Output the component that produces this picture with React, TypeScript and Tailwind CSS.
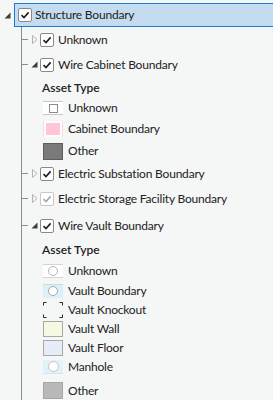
import React from "react";

const font = { fontFamily: '"Segoe UI", Lato, "Noto Sans", sans-serif' };

function Check({ disabled }: { disabled?: boolean }) {
  return (
    <span
      className={
        "flex w-[14px] h-[14px] shrink-0 items-center justify-center rounded-[2px] border bg-white " +
        (disabled ? "border-[#c8c8c8]" : "border-[#8a8a8a]")
      }
    >
      <svg width="10" height="10" viewBox="0 0 10 10">
        <path
          d="M1.5 5.2 L4 7.6 L8.6 2.4"
          fill="none"
          stroke={disabled ? "#a8a8a8" : "#1e1e1e"}
          strokeWidth="1.6"
        />
      </svg>
    </span>
  );
}

function Caret({ open }: { open?: boolean }) {
  return open ? (
    <svg width="7" height="7" viewBox="0 0 7 7" className="shrink-0">
      <path d="M6.5 0.5 L6.5 6.5 L0.5 6.5 Z" fill="#3c3c3c" />
    </svg>
  ) : (
    <svg width="6" height="9" viewBox="0 0 6 9" className="shrink-0">
      <path d="M0.5 0.5 L5 4.5 L0.5 8.5 Z" fill="none" stroke="#b4b4b4" />
    </svg>
  );
}

function LayerRow({
  label,
  open,
  disabled,
  h,
}: {
  label: string;
  open?: boolean;
  disabled?: boolean;
  h: string;
}) {
  return (
    <div className={"flex items-center " + h}>
      <span className="w-[6px] h-px bg-[#8c8c8c] shrink-0" />
      <span className="w-[9px] flex justify-center shrink-0 ml-[2px]">
        <Caret open={open} />
      </span>
      <span className="ml-[1px]">
        <Check disabled={disabled} />
      </span>
      <span className="ml-[4px] text-[12px] tracking-[-0.2px] text-[#222] whitespace-nowrap">{label}</span>
    </div>
  );
}

function Swatch({ kind }: { kind: string }) {
  const base = "w-[20px] shrink-0 ";
  switch (kind) {
    case "boxUnknown":
      return (
        <span className={base + "h-[14px] flex items-center justify-center bg-white border-y border-[#c8c8c8]"}>
          <span className="w-[9px] h-[9px] border-[1.5px] border-[#8a8a8a]" />
        </span>
      );
    case "pink":
      return (
        <span className={base + "h-[16px] flex items-center justify-center bg-white border-x border-[#ffd6e0]"}>
          <span className="w-[14px] h-[12px] bg-[#ffc6d6]" />
        </span>
      );
    case "darkGray":
      return <span className={base + "h-[17px] bg-[#7a7a7a] border border-[#5e5e5e]"} />;
    case "circle":
      return (
        <span className={base + "h-[14px] flex items-center justify-center bg-white border-y border-[#d4d4d4]"}>
          <span className="w-[10px] h-[10px] rounded-full border border-[#b4b4b4]" />
        </span>
      );
    case "blueCircle":
      return (
        <span className={base + "h-[14px] flex items-center justify-center bg-[#ddf0fa] border-t border-[#cfd8de]"}>
          <span className="w-[10px] h-[10px] rounded-full bg-white border border-[#a8a8a8]" />
        </span>
      );
    case "knockout":
      return (
        <svg width="20" height="16" viewBox="0 0 20 16" className="shrink-0">
          <path
            d="M0.5 3.5 V0.5 H3.5 M16.5 0.5 H19.5 V3.5 M0.5 12.5 V15.5 H3.5 M16.5 15.5 H19.5 V12.5"
            fill="none"
            stroke="#2a2a2a"
          />
        </svg>
      );
    case "wall":
      return <span className={base + "h-[16px] bg-[#f6f9e2] border border-[#a8a8a8]"} />;
    case "floor":
      return <span className={base + "h-[16px] bg-[#e6edf9] border border-[#a8a8a8]"} />;
    case "manhole":
      return (
        <span className={base + "h-[14px] flex items-center justify-center bg-[#dff3f8] border-b border-[#d6e6ea]"}>
          <span className="w-[11px] h-[11px] rounded-full bg-white border border-[#c4c4c4]" />
        </span>
      );
    default:
      return <span className={base + "h-[17px] bg-[#b9b9b9] border border-[#a6a6a6]"} />;
  }
}

function LegendRow({ kind, label, h }: { kind: string; label: string; h: string }) {
  return (
    <div className={"flex items-center pl-[21px] " + h}>
      <Swatch kind={kind} />
      <span className="ml-[5px] text-[12px] tracking-[-0.2px] text-[#222] whitespace-nowrap">{label}</span>
    </div>
  );
}

function Heading({ h }: { h: string }) {
  return (
    <div className={"flex items-center pl-[20px] text-[12px] font-semibold text-[#222] " + h}>
      Asset Type
    </div>
  );
}

export default function App() {
  return (
    <div className="w-[273px] h-[400px] overflow-hidden bg-[#f5f6f6]" style={font}>
      {/* root layer, selected */}
      <div className="flex items-center pt-[3px]">
        <span className="w-[14px] flex justify-center pl-[1px]">
          <Caret open />
        </span>
        <div className="flex flex-1 items-center h-[24px] pl-[3px] bg-[#c5dcf0] border border-r-0 border-[#1a7fd4]">
          <Check />
          <span className="ml-[3px] text-[12px] tracking-[-0.2px] text-[#222] whitespace-nowrap">Structure Boundary</span>
        </div>
      </div>

      {/* children with tree line */}
      <div className="ml-[21px] border-l border-[#8c8c8c]">
        <LayerRow label="Unknown" h="h-[25px]" />
        <LayerRow label="Wire Cabinet Boundary" open h="h-[25px]" />
        <Heading h="h-[21px]" />
        <LegendRow kind="boxUnknown" label="Unknown" h="h-[20px]" />
        <LegendRow kind="pink" label="Cabinet Boundary" h="h-[22px]" />
        <LegendRow kind="darkGray" label="Other" h="h-[22px]" />
        <LayerRow label="Electric Substation Boundary" h="h-[23px]" />
        <LayerRow label="Electric Storage Facility Boundary" disabled h="h-[27px]" />
        <LayerRow label="Wire Vault Boundary" open h="h-[27px]" />
        <Heading h="h-[22px]" />
        <LegendRow kind="circle" label="Unknown" h="h-[20px]" />
        <LegendRow kind="blueCircle" label="Vault Boundary" h="h-[19px]" />
        <LegendRow kind="knockout" label="Vault Knockout" h="h-[19px]" />
        <LegendRow kind="wall" label="Vault Wall" h="h-[19px]" />
        <LegendRow kind="floor" label="Vault Floor" h="h-[19px]" />
        <LegendRow kind="manhole" label="Manhole" h="h-[19px]" />
        <LegendRow kind="other" label="Other" h="h-[29px]" />
      </div>
    </div>
  );
}
